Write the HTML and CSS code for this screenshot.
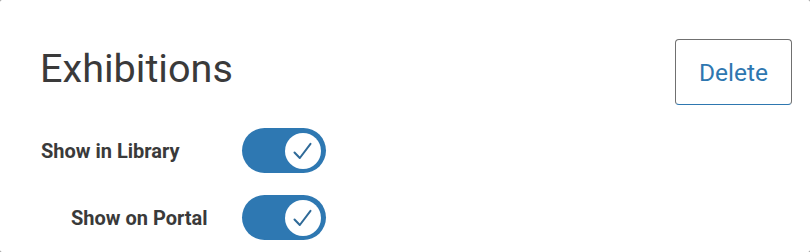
FILE: index.html
```html
<!DOCTYPE html>
<html lang="en">
<head>
<meta charset="utf-8">
<title>Exhibitions</title>
<link rel="stylesheet" href="styles.css">
</head>
<body>
<div class="card">
  <div class="header">
    <h1 class="title">Exhibitions</h1>
    <button class="btn-delete" type="button">Delete</button>
  </div>
  <div class="settings">
    <div class="label">Show in Library</div>
    <div class="toggle on">
      <span class="knob">
        <svg viewBox="0 0 36 36" width="36" height="36"><path d="M9.5 19.5 L14.8 25 L25.5 10.8" fill="none" stroke="#2f6a98" stroke-width="2" stroke-linecap="round" stroke-linejoin="round"/></svg>
      </span>
    </div>
    <div class="label label-indent">Show on Portal</div>
    <div class="toggle on">
      <span class="knob">
        <svg viewBox="0 0 36 36" width="36" height="36"><path d="M9.5 19.5 L14.8 25 L25.5 10.8" fill="none" stroke="#2f6a98" stroke-width="2" stroke-linecap="round" stroke-linejoin="round"/></svg>
      </span>
    </div>
  </div>
</div>
</body>
</html>
```
FILE: styles.css
```css
html, body {
  margin: 0;
  padding: 0;
  background: #8a8a8a;
}
body {
  font-family: Roboto, "Liberation Sans", sans-serif;
}
.card {
  background: #ffffff;
  border-radius: 2px;
  height: 252px;
  box-sizing: border-box;
  padding: 39px 18px 0 40px;
}
.header {
  display: flex;
  justify-content: space-between;
  align-items: flex-start;
}
.title {
  margin: 7px 0 0 0;
  font-size: 39.6px;
  line-height: 46px;
  font-weight: 400;
  color: #3a3a3a;
}
.btn-delete {
  width: 117px;
  height: 66px;
  box-sizing: border-box;
  background: #ffffff;
  border: 1px solid #707070;
  border-bottom-color: #2e77b0;
  border-radius: 4px;
  font-family: Roboto, "Liberation Sans", sans-serif;
  font-size: 24.5px;
  color: #2e77b0;
  padding: 0;
}
.settings {
  display: grid;
  grid-template-columns: 202px auto;
  row-gap: 22px;
  margin-top: 23px;
  align-items: center;
  justify-content: start;
}
.label {
  font-size: 20px;
  font-weight: 700;
  color: #3a3a3a;
  padding-left: 1px;
}
.label-indent {
  padding-left: 31px;
}
.toggle {
  width: 84px;
  height: 45px;
  border-radius: 23px;
  background: #2e78b2;
  display: flex;
  align-items: center;
  justify-content: flex-end;
  padding-right: 5px;
  box-sizing: border-box;
}
.knob {
  width: 36px;
  height: 36px;
  border-radius: 50%;
  background: #ffffff;
  display: block;
}
.knob svg {
  display: block;
}
```
